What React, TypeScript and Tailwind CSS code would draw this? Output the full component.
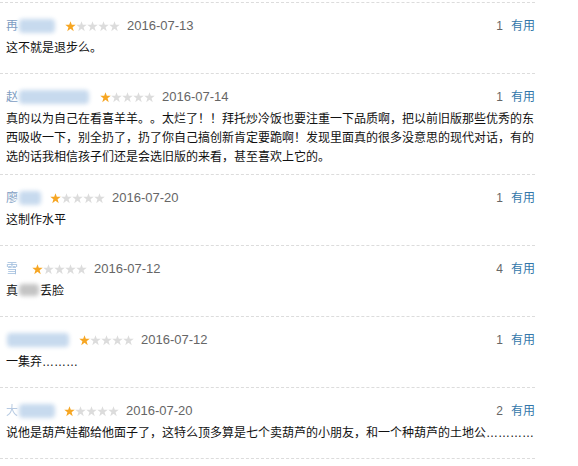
import React from "react";

function Star({ on }: { on: boolean }) {
  return (
    <svg width="11" height="11" viewBox="0 0 11 11" className="block">
      <polygon
        points="5.5,0.2 6.79,3.72 10.73,3.8 7.59,6.18 8.73,10.2 5.5,7.8 2.27,10.2 3.41,6.18 0.27,3.8 4.21,3.72"
        fill={on ? "#f6a623" : "#dcdcdc"}
      />
    </svg>
  );
}

function Stars() {
  return (
    <span className="ml-[7px] flex items-center">
      <Star on />
      <Star on={false} />
      <Star on={false} />
      <Star on={false} />
      <Star on={false} />
    </span>
  );
}

type Item = {
  first: string;
  nameW: string;
  blurW: string;
  date: string;
  votes: number;
  content: React.ReactNode;
  nowrap?: boolean;
};

const items: Item[] = [
  {
    first: "再",
    nameW: "w-[52px]",
    blurW: "w-[36px]",
    date: "2016-07-13",
    votes: 1,
    content: "这不就是退步么。",
  },
  {
    first: "赵",
    nameW: "w-[87px]",
    blurW: "w-[70px]",
    date: "2016-07-14",
    votes: 1,
    content:
      "真的以为自己在看喜羊羊。。太烂了！！拜托炒冷饭也要注重一下品质啊，把以前旧版那些优秀的东西吸收一下，别全扔了，扔了你自己搞创新肯定要跪啊！发现里面真的很多没意思的现代对话，有的选的话我相信孩子们还是会选旧版的来看，甚至喜欢上它的。",
  },
  {
    first: "廖",
    nameW: "w-[37px]",
    blurW: "w-[22px]",
    date: "2016-07-20",
    votes: 1,
    content: "这制作水平",
  },
  {
    first: "雪",
    nameW: "w-[19px]",
    blurW: "w-0",
    date: "2016-07-12",
    votes: 4,
    content: (
      <>
        真
        <span className="mx-[1px] inline-block h-[12px] w-[20px] rounded-sm bg-[#c4c4c4] align-[-1px] blur-[2px]" />
        丢脸
      </>
    ),
  },
  {
    first: "",
    nameW: "w-[66px]",
    blurW: "w-[62px]",
    date: "2016-07-12",
    votes: 1,
    content: <>一集弃………</>,
  },
  {
    first: "大",
    nameW: "w-[51px]",
    blurW: "w-[36px]",
    date: "2016-07-20",
    votes: 2,
    content: (
      <>说他是葫芦娃都给他面子了，这特么顶多算是七个卖葫芦的小朋友，和一个种葫芦的土地公…………</>
    ),
    nowrap: true,
  },
];

export default function App() {
  return (
    <div className="min-h-[466px] w-[578px] bg-white [font-family:'Liberation_Sans','Noto_Sans_CJK_SC',sans-serif] text-[12px] text-[#111] [text-spacing-trim:space-all]">
      <div className="mt-[2px] w-[535px] border-t border-dashed border-[#dcdcdc]">
        {items.map((it, i) => (
          <div
            key={i}
            className="border-b border-dashed border-[#dcdcdc] pb-[7px] pl-[6px] pt-[12px]"
          >
            <div className="flex h-[22px] items-center">
              <span className={`flex items-center overflow-visible ${it.nameW}`}>
                {it.first && (
                  <span
                    className={
                      it.first === "雪"
                        ? "text-[#9fbcdc] blur-[0.7px]"
                        : it.first === "大"
                          ? "text-[#9ab5d6] opacity-70"
                          : "text-[#7c9cc2]"
                    }
                  >
                    {it.first}
                  </span>
                )}
                {it.blurW !== "w-0" && (
                  <span
                    className={`ml-[1px] inline-block h-[14px] ${it.blurW} rounded-sm bg-[#c7daee] blur-[2px]`}
                  />
                )}
              </span>
              <Stars />
              <span className="ml-[7px] text-[13px] text-[#666]">{it.date}</span>
              <span className="ml-auto text-[#666]">{it.votes}</span>
              <span className="ml-[8px] text-[#3377aa]">有用</span>
            </div>
            <div
              className={`-mr-[4px] mt-[2px] min-h-[27px] leading-[19px] ${it.nowrap ? "whitespace-nowrap" : ""}`}
            >
              {it.content}
            </div>
          </div>
        ))}
      </div>
    </div>
  );
}
